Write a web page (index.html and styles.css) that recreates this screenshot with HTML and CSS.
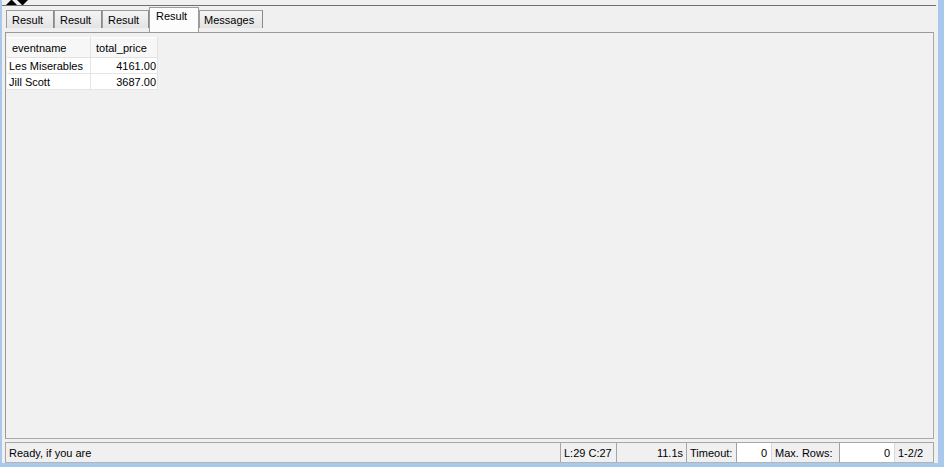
FILE: index.html
```html
<!DOCTYPE html>
<html>
<head>
<meta charset="utf-8">
<link rel="stylesheet" href="styles.css">
</head>
<body>
<div class="frame">
  <div class="topbar">
    <svg class="splitter" width="30" height="5" viewBox="0 0 30 5">
      <polygon points="6,5 17,5 11.5,-0.5" fill="#000"/>
      <polygon points="17,0 28,0 22.5,5.5" fill="#000"/>
    </svg>
  </div>
  <div class="tabs">
    <div class="tab">Result</div>
    <div class="tab">Result</div>
    <div class="tab">Result</div>
    <div class="tab active">Result</div>
    <div class="tab">Messages</div>
  </div>
  <div class="panel">
    <table class="grid">
      <thead>
        <tr><th class="c1">eventname</th><th class="c2">total_price</th></tr>
      </thead>
      <tbody>
        <tr><td class="c1">Les Miserables</td><td class="c2 num">4161.00</td></tr>
        <tr><td class="c1">Jill Scott</td><td class="c2 num">3687.00</td></tr>
      </tbody>
    </table>
  </div>
  <div class="status">
    <div class="seg main">Ready, if you are</div>
    <div class="seg pos">L:29 C:27</div>
    <div class="seg time">11.1s</div>
    <div class="lbl timeout">Timeout:</div>
    <div class="box tbox">0</div>
    <div class="lbl maxrows">Max. Rows:</div>
    <div class="box mbox">0</div>
    <div class="lbl count">1-2/2</div>
  </div>
</div>
</body>
</html>
```

FILE: styles.css
```css
html, body {
  margin: 0;
  padding: 0;
  background: #a8c9ec;
}
body {
  width: 944px;
  height: 467px;
  overflow: hidden;
  font-family: "Liberation Sans", Arial, sans-serif;
  font-size: 11px;
  color: #000;
}
.frame {
  box-sizing: border-box;
  width: 944px;
  height: 467px;
  border-left: 2px solid #a8c9ec;
  border-right: 6px solid #a8c9ec;
  border-bottom: 4px solid #a8c9ec;
  background: #f0f0f0;
  display: flex;
  flex-direction: column;
  white-space: nowrap;
}
.topbar {
  height: 5px;
  border-bottom: 1px solid #6f6f6f;
  margin-right: 2px;
}
.splitter {
  display: block;
  margin-left: -2px;
}
.tabs {
  height: 26px;
  display: flex;
  align-items: flex-start;
  padding-left: 4px;
}
.tab {
  box-sizing: border-box;
  margin-top: 4px;
  height: 18px;
  padding: 3px 0 0 5px;
  border: 1px solid #9c9c9c;
  border-bottom: none;
  border-right-color: #8a8a8a;
  background: linear-gradient(#f4f4f4, #e4e4e4);
  line-height: 13px;
}
.tab:nth-child(1) { width: 48px; }
.tab:nth-child(2) { width: 48px; }
.tab:nth-child(3) { width: 47px; }
.tab:nth-child(5) { width: 64px; padding-left: 4px; }
.tab.active {
  width: 50px;
  margin-top: 1px;
  height: 25px;
  padding: 2px 0 0 6px;
  background: #fcfcfc;
  border-color: #9c9c9c;
  position: relative;
  z-index: 1;
}
.panel {
  flex: 1;
  margin: 0 4px 0 3px;
  border: 1px solid #a8a8a8;
  border-top-color: #9a9a9a;
  border-left-color: #9a9a9a;
  background: #f1f1f1;
  padding: 4px 0 0 1px;
}
.grid {
  border-collapse: collapse;
  background: #fff;
  font-size: 11px;
  table-layout: fixed;
}
.grid th {
  height: 19px;
  padding: 0 0 0 5px;
  text-align: left;
  font-weight: normal;
  background: #f7f7f7;
  border-right: 1px solid #e2e2e2;
  border-bottom: 1px solid #e2e2e2;
  border-top: 1px solid #fff;
}
.grid td {
  height: 15px;
  padding: 0 2px 0 2px;
  border-right: 1px solid #e4e4e4;
  border-bottom: 1px solid #e4e4e4;
  line-height: 14px;
}
.grid .c1 { width: 79px; }
.grid th.c1 { width: 76px; }
.grid th.c2 { width: 61px; }
.grid td.c2 { width: 63px; }
.grid .num { text-align: right; padding-right: 1px; }
.status {
  height: 21px;
  box-sizing: border-box;
  margin: 3px 4px 0 3px;
  border: 1px solid #a6a6a6;
  border-bottom-color: #b4b4b4;
  display: flex;
  align-items: stretch;
  line-height: 20px;
}
.seg {
  box-sizing: border-box;
  border-right: 1px solid #a6a6a6;
}
.main { width: 555px; padding-left: 3px; }
.pos { width: 56px; padding-left: 3px; }
.time { width: 70px; text-align: right; padding-right: 3px; }
.lbl { padding-left: 3px; }
.timeout { width: 49px; box-sizing: border-box; }
.box {
  box-sizing: border-box;
  background: #fff;
  border-left: 1px solid #a0a0a0;
  border-right: 1px solid #d8d8d8;
  text-align: right;
  padding-right: 4px;
}
.tbox { width: 36px; }
.maxrows { width: 67px; box-sizing: border-box; }
.mbox { width: 56px; }
.count { padding-left: 3px; }
```
